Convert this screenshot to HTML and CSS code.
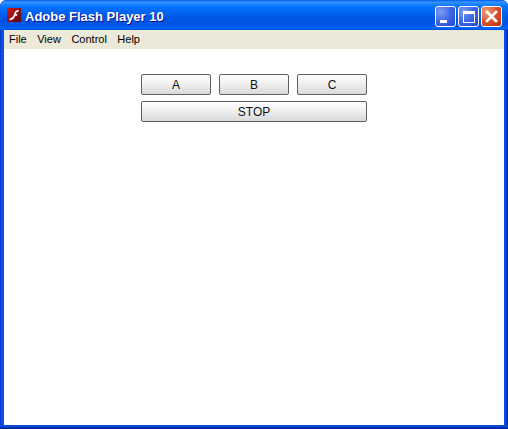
FILE: index.html
```html
<!DOCTYPE html>
<html lang="en">
<head>
    <meta charset="UTF-8">
    <title>Adobe Flash Player 10</title>
    <link rel="stylesheet" href="styles.css">
</head>
<body>
    <div class="window">
        <div class="titlebar">
            <svg class="app-icon" width="16" height="16" viewBox="0 0 16 16">
                <defs>
                    <linearGradient id="flashBg" x1="0" y1="0" x2="1" y2="1">
                        <stop offset="0" stop-color="#d0181c"/>
                        <stop offset="1" stop-color="#5c0508"/>
                    </linearGradient>
                </defs>
                <rect x="1" y="1" width="14" height="14" fill="url(#flashBg)"/>
                <path d="M12.5 2.8 C9.6 3 8.8 5 8 7.2 C7.3 9.3 6.5 11 3.6 11.4 L3.6 13.2 C7.2 13 8.5 11 9.2 8.8 L11.2 8.8 L11.2 7 L9.7 7 C10 5.8 10.8 5 12.5 4.8 Z" fill="#fff"/>
            </svg>
            <span class="title">Adobe Flash Player 10</span>
            <div class="controls">
                <div class="ctl ctl-blue">
                    <span class="min-glyph"></span>
                </div>
                <div class="ctl ctl-blue">
                    <span class="max-glyph"></span>
                </div>
                <div class="ctl ctl-red">
                    <svg width="13" height="13" viewBox="0 0 13 13">
                        <path d="M2 2 L11 11 M11 2 L2 11" stroke="#fff" stroke-width="2.6" stroke-linecap="square"/>
                    </svg>
                </div>
            </div>
        </div>
        <div class="menubar">
            <span class="menu-item">File</span>
            <span class="menu-item">View</span>
            <span class="menu-item">Control</span>
            <span class="menu-item">Help</span>
        </div>
        <div class="stage">
            <div class="button-grid">
                <button class="btn">A</button>
                <button class="btn">B</button>
                <button class="btn">C</button>
                <button class="btn btn-wide">STOP</button>
            </div>
        </div>
        <div class="bottom-edge"></div>
    </div>
</body>
</html>
```

FILE: styles.css
```css
html,
body {
    margin: 0;
    padding: 0;
}

body {
    width: 508px;
    height: 429px;
    overflow: hidden;
    font-family: "Liberation Sans", Arial, sans-serif;
}

.window {
    display: flex;
    flex-direction: column;
    width: 508px;
    height: 429px;
    box-sizing: border-box;
    padding: 0 4px;
    background: linear-gradient(to right, #0831d9 0, #0855dd 2px, #0855dd 3px, #0a4fe0 4px, #0a4fe0 504px, #0855dd 505px, #0831d9 507px, #00138c 508px);
    border-radius: 6px 6px 0 0;
}

.titlebar {
    display: flex;
    align-items: center;
    height: 30px;
    flex: none;
    margin: 0 -4px;
    padding: 0 6px 0 6px;
    box-sizing: border-box;
    border-radius: 7px 7px 0 0;
    background: linear-gradient(to bottom, #0058ee 0, #3593ff 2px, #288eff 3px, #127dff 5px, #036ffc 8px, #0262ee 13px, #0057e5 18px, #0054e3 22px, #0055eb 25px, #005bf5 27px, #026afe 28px, #0062ef 29px, #0043cf 30px);
}

.app-icon {
    flex: none;
}

.title {
    margin-left: 3px;
    padding-top: 2px;
    color: #fff;
    font-size: 13px;
    font-weight: bold;
    white-space: nowrap;
    text-shadow: 1px 1px 0 #0f1089;
}

.controls {
    display: flex;
    gap: 2px;
    margin-left: auto;
    padding-top: 3px;
}

.ctl {
    display: flex;
    align-items: center;
    justify-content: center;
    position: relative;
    width: 21px;
    height: 21px;
    box-sizing: border-box;
    border: 1px solid #fff;
    border-radius: 3px;
}

.ctl-blue {
    background: radial-gradient(circle at 25% 25%, #7d9df0 0, #3c68e6 50%, #2048d0 100%);
}

.ctl-red {
    background: radial-gradient(circle at 25% 25%, #f0a080 0, #d9532c 50%, #bb2e10 100%);
}

.min-glyph {
    position: absolute;
    left: 4px;
    bottom: 3px;
    width: 7px;
    height: 3px;
    background: #fff;
}

.max-glyph {
    display: block;
    width: 12px;
    height: 12px;
    box-sizing: border-box;
    border: 1px solid #fff;
    border-top-width: 3px;
}

.menubar {
    display: flex;
    align-items: center;
    flex: none;
    height: 19px;
    padding: 0 0 2px 5px;
    box-sizing: border-box;
    gap: 10.5px;
    background: #ece9d8;
    color: #000;
    font-family: "Liberation Sans", Tahoma, sans-serif;
    font-size: 11px;
}

.stage {
    flex: 1;
    background: #fff;
    padding-top: 25px;
}

.button-grid {
    display: grid;
    grid-template-columns: repeat(3, 70px);
    grid-auto-rows: 21px;
    gap: 6px 8px;
    justify-content: center;
}

.btn {
    padding: 0;
    box-sizing: border-box;
    border: 1px solid #5e6062;
    border-radius: 2px;
    background: linear-gradient(to bottom, #ffffff 0, #f4f4f4 35%, #d9d9d9 100%);
    color: #111;
    font-family: "Liberation Sans", Arial, sans-serif;
    font-size: 12px;
}

.btn-wide {
    grid-column: 1 / 4;
}

.bottom-edge {
    flex: none;
    height: 4px;
    margin: 0 -4px;
    background: linear-gradient(to bottom, #0855dd 0, #0841cf 2px, #00138c 4px);
}
```
